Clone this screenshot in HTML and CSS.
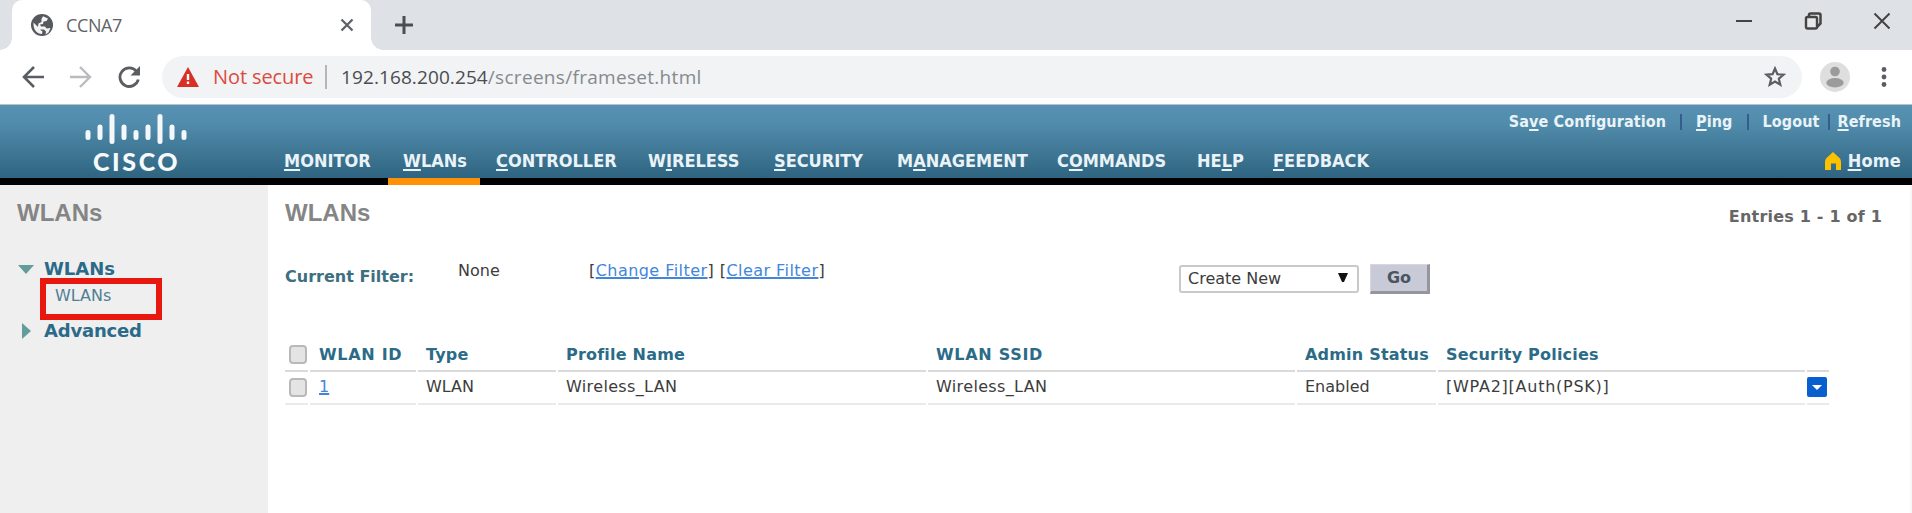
FILE: index.html
```html
<!DOCTYPE html>
<html lang="en">
<head>
<meta charset="utf-8">
<title>CCNA7</title>
<link rel="stylesheet" href="styles.css">
</head>
<body>
<div class="tabstrip">
  <div class="tab">
    <svg class="globe" width="24" height="24" viewBox="0 0 24 24"><circle cx="12" cy="12" r="11" fill="#55585c"/><path d="M3.500 9.500l4 4 3 .5v3l2 1.500-.5 2.500c-5 0-9-4-8.500-11.500zM13 3.200l5 2.300-1.500 2.500-3 .5-.5 2.500-3 .5 1 2h4l1.500 2 4-.5-2 4.500-3 2 .5-3-2-2h-3l-3-3 .5-3 3-1.500V6z" fill="#f3f4f4"/></svg>
    <span class="tab-title">CCNA7</span>
    <svg class="tab-close" width="14" height="14" viewBox="0 0 14 14"><path d="M1.500 1.500l11 11M12.500 1.500l-11 11" stroke="#5f6368" stroke-width="2.300"/></svg>
  </div>
  <svg class="plus" width="20" height="20" viewBox="0 0 20 20"><path d="M10 1v18M1 10h18" stroke="#4b4e52" stroke-width="3"/></svg>
  <div class="window-buttons">
    <svg width="18" height="18" viewBox="0 0 18 18"><path d="M1 9h16" stroke="#444" stroke-width="2"/></svg>
    <svg width="18" height="18" viewBox="0 0 18 18"><path d="M5 5V3q0-1.500 1.500-1.500H15q1.500 0 1.500 1.500v8.500L13 15" fill="none" stroke="#444" stroke-width="2.500"/><rect x="2" y="5" width="11" height="11.500" rx="1.500" fill="#e6e8ec" stroke="#444" stroke-width="2.400"/></svg>
    <svg width="18" height="18" viewBox="0 0 18 18"><path d="M1.500 1.500l15 15M16.500 1.500l-15 15" stroke="#444" stroke-width="2"/></svg>
  </div>
</div>
<div class="toolbar">
  <svg class="nav-icon" width="22" height="22" viewBox="0 0 22 22"><path d="M22 11H3M12 1L2 11l10 10" fill="none" stroke="#5a5d61" stroke-width="2.600"/></svg>
  <svg class="nav-icon" width="22" height="22" viewBox="0 0 22 22"><path d="M0 11h19M10 1l10 10-10 10" fill="none" stroke="#b9bbbe" stroke-width="2.400"/></svg>
  <svg class="nav-icon" width="22" height="22" viewBox="0 0 22 22"><path d="M18.500 5.300A9.300 9.300 0 1 0 20.300 13.500" fill="none" stroke="#5a5d61" stroke-width="2.800"/><path d="M22 0v9.500h-9.500z" fill="#5a5d61"/></svg>
  <div class="omnibox">
    <svg class="warn" width="22" height="20" viewBox="0 0 22 20"><path d="M11 0l11 20H0z" fill="#d93025"/><path d="M11 7v6M11 14.500v2.500" stroke="#fff" stroke-width="2.400"/></svg>
    <span class="not-secure">Not secure</span>
    <span class="divider"></span>
    <span class="url">192.168.200.254<span class="path">/screens/frameset.html</span></span>
    <svg class="star" width="22" height="22" viewBox="0 0 22 22"><path d="M11 2.500l2.400 5.700 6.100.5-4.700 4 1.500 6L11 15.500l-5.300 3.200 1.500-6-4.700-4 6.100-.5z" fill="none" stroke="#5a5d61" stroke-width="2.200"/></svg>
  </div>
  <svg class="avatar" width="30" height="30" viewBox="0 0 30 30"><circle cx="15" cy="15" r="15" fill="#dedede"/><circle cx="15" cy="9.500" r="4.800" fill="#9b9b9b"/><ellipse cx="15" cy="20.800" rx="8.700" ry="4.700" fill="#9b9b9b"/></svg>
  <svg class="dots" width="6" height="22" viewBox="0 0 6 22"><g fill="#5a5d61"><circle cx="3" cy="3.500" r="2.400"/><circle cx="3" cy="11" r="2.400"/><circle cx="3" cy="18.500" r="2.400"/></g></svg>
</div>
<header class="banner">
  <div class="logo">
    <svg width="102" height="32" viewBox="0 0 102 32"><path d="M3 19.500v5M15 14v10.500M27 3.500v25M39 14v10.500M51 19.500v5M63 14v10.500M75 3.500v25M87 14v10.500M99 19.500v5" stroke="#f4f8fa" stroke-width="5" stroke-linecap="round"/></svg>
    <span class="brand">CISCO</span>
  </div>
  <nav class="menu">
    <a><u>M</u>ONITOR</a><a class="active"><u>W</u>LANs</a><a><u>C</u>ONTROLLER</a><a>W<u>I</u>RELESS</a><a><u>S</u>ECURITY</a><a>M<u>A</u>NAGEMENT</a><a>C<u>O</u>MMANDS</a><a>HE<u>L</u>P</a><a><u>F</u>EEDBACK</a>
  </nav>
  <div class="tools">
    <div class="links"><a>Sa<u>v</u>e Configuration</a><i class="bar wide"></i><a><u>P</u>ing</a><i class="bar wide"></i><a>Logout</a><i class="bar"></i><a><u>R</u>efresh</a></div>
    <div class="home"><svg width="16" height="18" viewBox="0 0 16 18"><path d="M8 0l7 6.500Q16 8 16 10v8h-5v-6.500H6V18H0v-8q0-2 1-3.500z" fill="#fbc200"/></svg><a><u>H</u>ome</a></div>
  </div>
</header>
<div class="page">
  <aside class="sidebar">
    <h1>WLANs</h1>
    <div class="node"><svg width="18" height="16" viewBox="0 0 18 16"><path d="M1 4h16l-8 9z" fill="#649c9a"/></svg><b>WLANs</b></div>
    <div class="marked">WLANs</div>
    <div class="node lower"><svg width="18" height="16" viewBox="0 0 18 16"><path d="M5 0l9 8-9 8z" fill="#649c9a"/></svg><b>Advanced</b></div>
  </aside>
  <main class="content">
    <div class="heading"><h1>WLANs</h1><span class="entries">Entries 1 - 1 of 1</span></div>
    <div class="filter">
      <b class="filter-label">Current Filter:</b>
      <span class="filter-value">None</span>
      <span class="filter-links">[<a>Change Filter</a>] [<a>Clear Filter</a>]</span>
      <div class="select"><span>Create New</span><svg width="10" height="10" viewBox="0 0 10 10"><path d="M0 0h10L6 9H4z" fill="#111"/></svg></div>
      <button class="go">Go</button>
    </div>
    <div class="grid">
      <div class="row head">
        <span class="cell pick"><i class="check"></i></span><span class="cell id loose">WLAN ID</span><span class="cell">Type</span><span class="cell">Profile Name</span><span class="cell loose">WLAN SSID</span><span class="cell">Admin Status</span><span class="cell">Security Policies</span><span class="cell"></span>
      </div>
      <div class="row">
        <span class="cell pick"><i class="check"></i></span><span class="cell id"><a>1</a></span><span class="cell">WLAN</span><span class="cell spaced">Wireless_LAN</span><span class="cell spaced">Wireless_LAN</span><span class="cell">Enabled</span><span class="cell policy">[WPA2][Auth(PSK)]</span><span class="cell action"><svg width="20" height="20" viewBox="0 0 20 20"><rect width="20" height="20" rx="2" fill="#0860cf"/><path d="M5 8h10l-5 5z" fill="#fff"/></svg></span>
      </div>
    </div>
  </main>
</div>
</body>
</html>
```
FILE: styles.css
```css
* { box-sizing: border-box; }
body { margin: 0; width: 1912px; height: 513px; overflow: hidden; background: #fff; font: 16px/24px "DejaVu Sans", Verdana, sans-serif; color: #3c3c3c; }
svg { display: block; flex: none; }
h1 { margin: 0; font: bold 24px/28px "Liberation Sans", Arial, sans-serif; color: #858585; }
u { text-decoration-thickness: 1.5px; text-underline-offset: 2px; }

.tabstrip { display: flex; height: 50px; background: #dee1e6; padding-left: 12px; }
.tab { position: relative; width: 359px; background: #fff; border-radius: 10px 10px 0 0; display: flex; align-items: center; padding: 0 17px 0 18px; }
.tab::before, .tab::after { content: ""; position: absolute; bottom: 0; width: 12px; height: 12px; }
.tab::before { left: -12px; background: radial-gradient(circle at 0 0, transparent 11.5px, #fff 12px); }
.tab::after { right: -12px; background: radial-gradient(circle at 100% 0, transparent 11.5px, #fff 12px); }
.tab-title { margin-left: 12px; font: 18px/24px "Open Sans", sans-serif; letter-spacing: -.4px; color: #5f6368; }
.tab-close { margin-left: auto; }
.plus { margin: 15px 0 0 23px; }
.window-buttons { display: flex; gap: 51px; margin: 12px 21px 0 auto; }

.toolbar { display: flex; align-items: center; height: 55px; padding: 0 25px 0 22px; background: #fff; border-bottom: 1px solid #b9c3c9; }
.nav-icon { margin-right: 26px; }
.nav-icon:nth-child(3) { margin-right: 22px; }
.omnibox { display: flex; align-items: center; width: 1640px; height: 42px; border-radius: 21px; background: #f1f3f4; padding: 0 16px 0 15px; font: 20px/24px "Open Sans", sans-serif; }
.not-secure { margin-left: 14px; width: 112px; color: #dc4a40; letter-spacing: -.1px; }
.divider { width: 2px; height: 24px; background: #b4b7ba; margin-right: 14px; }
.url { font-size: 19px; color: #4a4d51; letter-spacing: .1px; }
.path { color: #868a8e; letter-spacing: .3px; }
.star { margin-left: auto; }
.avatar { margin-left: 18px; }
.dots { margin-left: 31px; }

.banner { display: flex; height: 80px; background: linear-gradient(#5892b2 0, #528cac 18px, #2e6480 73px, #000 73px); color: #e9f3f8; font-family: "DejaVu Sans Condensed", "DejaVu Sans", sans-serif; font-stretch: condensed; font-weight: bold; }
.logo { width: 274px; padding: 8px 0 0 85px; }
.brand { display: block; margin: 2px 0 0 8px; font: 900 25px/28px Lato, sans-serif; letter-spacing: 2.6px; color: #f7fafc; }
.menu { display: grid; grid-template-columns: 114px 98px 152px 126px 123px 160px 140px 76px 116px; padding-top: 44px; font-size: 18px; }
.menu a { height: 36px; padding-left: 10px; white-space: nowrap; line-height: 24px; }
.menu .active { width: 92px; padding-left: 15px; border-bottom: 7px solid #ff9107; }
.tools { margin-left: auto; padding: 5px 11px 0 0; }
.links, .home { display: flex; align-items: center; justify-content: flex-end; }
.links a { letter-spacing: .1px; }
.bar { width: 2px; height: 16px; margin: 0 8px; background: #365b8d; }
.bar.wide { margin: 0 14px; }
.home { margin-top: 14px; font-size: 18px; gap: 7px; line-height: 26px; letter-spacing: .2px; }

.page { display: flex; height: 328px; }
.sidebar { width: 268px; background: #efefef; padding: 14px 0 0 17px; }
.node { display: flex; align-items: center; gap: 9px; height: 26px; font-size: 18px; color: #2b6a88; }
.lower { letter-spacing: -.2px; }
.sidebar h1 { margin-bottom: 29px; }
.marked { width: 122px; height: 42px; margin: -4px 0 -2px 23px; border: 6px solid #e81710; padding-left: 9px; line-height: 24px; color: #4f7f95; }
.content { flex: 1; padding: 14px 2px 0 17px; border-right: 2px solid #f7f7f7; }
.heading { display: flex; justify-content: space-between; }
.entries { margin: 6px 26px 0 0; font-weight: bold; color: #666; letter-spacing: .2px; }
.filter { display: flex; align-items: flex-start; height: 80px; margin-top: 30px; }
.filter-label { width: 173px; padding-top: 6px; color: #3d6f80; }
.filter-value { width: 131px; }
.filter-links { width: 590px; letter-spacing: .45px; }
a { color: inherit; }
.filter-links a, .row a { color: #4286dc; text-decoration: underline; text-decoration-thickness: 2px; }
.select { display: flex; align-items: center; justify-content: space-between; width: 180px; height: 28px; margin-top: 6px; padding: 0 9px 0 7px; border: 2px solid #c9c9c9; border-radius: 3px; background: #fff; }
.select svg { margin-bottom: 3px; }
.go { width: 60px; height: 30px; margin: 5px 0 0 11px; padding: 0; border: solid; border-width: 1px 3px 3px 1px; border-color: #d7d7df #9595a0 #9595a0 #d7d7df; background: #c9cad7; font: bold 16px/24px "DejaVu Sans", sans-serif; color: #4a5560; }

.grid { width: 1544px; }
.row { display: grid; grid-template-columns: 23px 106px 138px 368px 367px 139px 367px 22px; column-gap: 2px; height: 33px; }
.cell { padding: 3px 0 0 8px; white-space: nowrap; border-bottom: 2px solid #eaeaea; }
.cell.id { padding-left: 9px; }
.head .cell { border-color: #dadada; color: #2b6b88; font-weight: bold; letter-spacing: .2px; padding-top: 4px; }
.head .loose { letter-spacing: .7px; }
.row .spaced { letter-spacing: .35px; }
.row .policy { letter-spacing: .75px; }
.row .pick { padding: 6px 0 0 4px; }
.check { display: block; width: 18px; height: 19px; border: 2px solid #b9b9b9; border-radius: 4px; background: #e4e4e4; }
.row .action { padding: 5px 0 0; }
```
